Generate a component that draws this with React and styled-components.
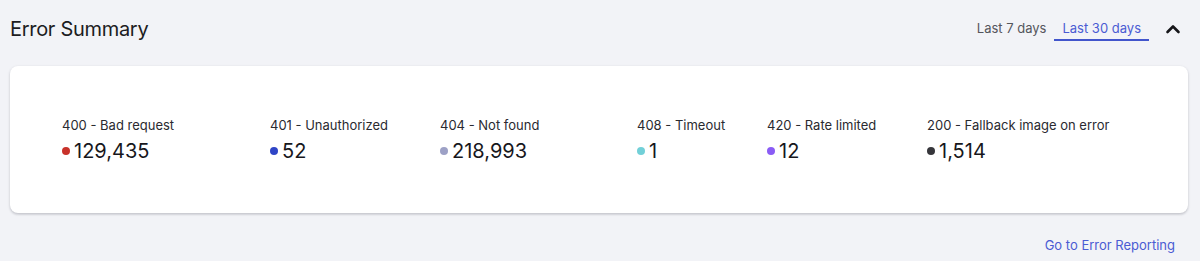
import React from "react";
import styled, { createGlobalStyle } from "styled-components";

const Global = createGlobalStyle`
  html, body { margin: 0; padding: 0; background: #f2f3f7; }
  body { font-family: Inter, "Noto Sans", sans-serif; color: #1f1f24; }
`;

const Page = styled.div`
  padding: 0 12px 0 10px;
  width: 1200px;
  box-sizing: border-box;
`;

const Header = styled.div`
  display: flex;
  align-items: center;
  justify-content: space-between;
  height: 58px;
`;

const Title = styled.h2`
  margin: 0;
  font-size: 20px;
  font-weight: 400;
  color: #1c1c22;
  letter-spacing: -0.3px;
`;

const Controls = styled.div`
  display: flex;
  align-items: center;
`;

const Tab = styled.button`
  border: none;
  background: none;
  font-family: inherit;
  font-size: 13px;
  line-height: 18px;
  padding: 4px 8px 2px;
  margin-bottom: 2px;
  border-bottom: 2px solid ${(p) => (p.$active ? "#4255cc" : "transparent")};
  color: ${(p) => (p.$active ? "#4a5bd3" : "#55565c")};
  cursor: pointer;
`;

const Toggle = styled.button`
  border: none;
  background: none;
  padding: 0;
  margin: 0 3px 0 12px;
  display: flex;
  align-items: center;
  justify-content: center;
  width: 24px;
  height: 24px;
  color: #16161a;
`;

const Card = styled.div`
  margin-top: 8px;
  height: 147px;
  background: #fff;
  border-radius: 8px;
  box-shadow: 0 1px 3px rgba(20, 20, 40, 0.18), 0 2px 2px rgba(20, 20, 40, 0.06);
  display: grid;
  grid-template-columns: 208px 170px 197px 130px 160px auto;
  align-content: center;
  padding: 0 0 0 52px;
  box-sizing: border-box;
`;

const Stat = styled.div`
  display: flex;
  flex-direction: column;
  gap: 4px;
`;

const Label = styled.div`
  font-size: 13px;
  line-height: 19px;
  color: #2a2a30;
  white-space: nowrap;
`;

const Value = styled.div`
  display: flex;
  align-items: center;
  gap: 4px;
  font-size: 20px;
  line-height: 24px;
  color: #17171c;
`;

const Dot = styled.span`
  width: 8px;
  height: 8px;
  border-radius: 50%;
  background: ${(p) => p.$color};
  flex: none;
`;

const Footer = styled.div`
  display: flex;
  justify-content: flex-end;
  padding: 23px 13px 0 0;
`;

const Link = styled.a`
  font-size: 13px;
  line-height: 18px;
  color: #4a5bd3;
  text-decoration: none;
  cursor: pointer;
`;

const stats = [
  { label: "400 - Bad request", value: "129,435", color: "#c8322a" },
  { label: "401 - Unauthorized", value: "52", color: "#2f45c6" },
  { label: "404 - Not found", value: "218,993", color: "#9da1c6" },
  { label: "408 - Timeout", value: "1", color: "#72d0d8" },
  { label: "420 - Rate limited", value: "12", color: "#8a5cf5" },
  { label: "200 - Fallback image on error", value: "1,514", color: "#36363b" },
];

export default function App() {
  return (
    <Page>
      <Global />
      <Header>
        <Title>Error Summary</Title>
        <Controls>
          <Tab>Last 7 days</Tab>
          <Tab $active>Last 30 days</Tab>
          <Toggle aria-label="Collapse">
            <svg width="24" height="24" viewBox="0 0 24 24" fill="none" stroke="currentColor" strokeWidth="2.6" strokeLinecap="round" strokeLinejoin="round">
              <polyline points="6.5 15 12 9.5 17.5 15" />
            </svg>
          </Toggle>
        </Controls>
      </Header>
      <Card>
        {stats.map((s) => (
          <Stat key={s.label}>
            <Label>{s.label}</Label>
            <Value>
              <Dot $color={s.color} />
              {s.value}
            </Value>
          </Stat>
        ))}
      </Card>
      <Footer>
        <Link>Go to Error Reporting</Link>
      </Footer>
    </Page>
  );
}
